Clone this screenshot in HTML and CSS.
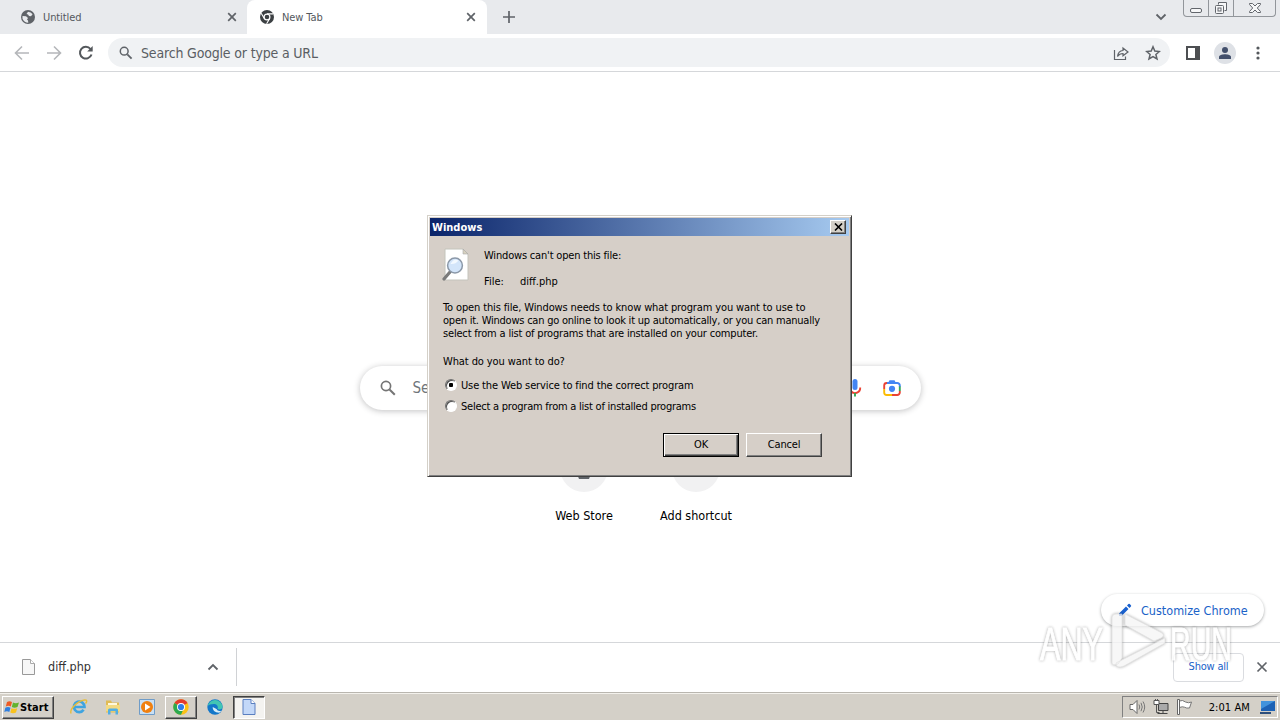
FILE: index.html
```html
<!DOCTYPE html>
<html lang="en">
<head>
    <meta charset="UTF-8">
    <title>New Tab</title>
    <link rel="stylesheet" href="styles.css">
</head>
<body>
<div class="browser">
    <div class="tabstrip">
        <div class="tab">
            <svg class="favicon" width="14" height="14" viewBox="0 0 14 14"><circle cx="7" cy="7" r="7" fill="#5f6368"/><path d="M1.500 6l3.500.2 2 1.800-1 1.500 1 1 .3 2.200q-4-.2-5.800-4zM7 1.700q3 0 4.600 2.500l-1.600 2-2-.2-1-1.500-1.500-.5z" fill="#e8eaed"/></svg>
            <span class="tab-title">Untitled</span>
            <svg class="tab-close" width="10" height="10" viewBox="0 0 10 10"><path d="M1.200 1.200l7.600 7.600M8.800 1.200L1.200 8.800"/></svg>
        </div>
        <div class="tab active">
            <svg class="favicon" width="14" height="14" viewBox="0 0 14 14"><circle cx="7" cy="7" r="7" fill="#3c4043"/><circle cx="7" cy="7" r="2.900" fill="#3c4043" stroke="#fff" stroke-width="1.200"/><path d="M7 3.900h6.200M4.300 8.500L1.200 3.200M9.700 8.500L6.600 13.800" stroke="#fff" stroke-width="1.100"/></svg>
            <span class="tab-title">New Tab</span>
            <svg class="tab-close" width="10" height="10" viewBox="0 0 10 10"><path d="M1.200 1.200l7.600 7.600M8.800 1.200L1.200 8.800"/></svg>
        </div>
        <svg class="new-tab" width="14" height="14" viewBox="0 0 14 14"><path d="M7 1v12M1 7h12"/></svg>
        <svg class="tab-search" width="12" height="8" viewBox="0 0 12 8"><path d="M1.500 1.500L6 6l4.500-4.500"/></svg>
        <div class="window-buttons">
            <span><svg width="14" height="7" viewBox="0 0 14 7"><rect x="1.500" y="1.500" width="11" height="4" rx="1.500"/></svg></span>
            <span><svg width="14" height="14" viewBox="0 0 14 14"><path d="M4.500 3.500v-2h8v8h-2"/><rect x="1.500" y="4.500" width="8" height="8" rx="1"/><rect x="4" y="7" width="3" height="3"/></svg></span>
            <span><svg width="14" height="12" viewBox="0 0 14 12"><path d="M1.500 1.500h3L7 4l2.500-2.500h3v1L9.300 6l3.200 3.500v1h-3L7 8l-2.500 2.500h-3v-1L4.700 6 1.500 2.500z"/></svg></span>
        </div>
    </div>

    <div class="toolbar">
        <svg class="nav dim" width="16" height="16" viewBox="0 0 16 16"><path d="M15 8H2M8 1.500L1.500 8 8 14.500"/></svg>
        <svg class="nav dim" width="16" height="16" viewBox="0 0 16 16"><path d="M1 8h13M8 1.500L14.500 8 8 14.500"/></svg>
        <svg class="nav" width="16" height="16" viewBox="0 0 16 16"><path d="M13.500 9.500A5.900 5.900 0 1 1 12.500 4l1 1.300"/><path d="M14.700 1v5.500H9.200z" class="solid"/></svg>
        <div class="omnibox">
            <svg width="14" height="14" viewBox="0 0 14 14"><circle cx="5.200" cy="5.200" r="3.900" fill="none" stroke="#5f6368" stroke-width="1.500"/><path d="M8.300 8.300l4.300 4.300" stroke="#5f6368" stroke-width="1.800"/></svg>
            <span class="omnibox-text">Search Google or type a URL</span>
            <svg class="share" width="16" height="16" viewBox="0 0 16 16"><path d="M1.500 5v9.500h11v-3"/><path d="M4.500 11.500c.5-4 2-5.700 5.500-6V3l5 4-5 3.800V8.500c-2.500 0-4 .7-5.500 3z"/></svg>
            <svg class="star" width="16" height="16" viewBox="0 0 16 16"><path d="M8 1.800l1.800 4.300 4.600.4-3.500 3 1.100 4.500L8 11.600 4 14l1.100-4.500-3.500-3 4.600-.4z"/></svg>
        </div>
        <svg class="side-panel" width="14" height="14" viewBox="0 0 14 14"><rect x="1" y="1" width="12" height="12"/><path d="M9 1h4v12H9z" class="solid"/></svg>
        <span class="avatar"><svg width="12" height="12" viewBox="0 0 12 12"><circle cx="6" cy="3" r="3"/><path d="M0 12V9.800C0 8 3.500 7.200 6 7.200s6 .8 6 2.600V12z"/></svg></span>
        <svg class="menu-dots" width="4" height="14" viewBox="0 0 4 14"><circle cx="2" cy="2" r="1.600"/><circle cx="2" cy="7" r="1.600"/><circle cx="2" cy="12" r="1.600"/></svg>
    </div>

    <div class="page">
        <div class="searchbox">
            <svg width="16" height="16" viewBox="0 0 16 16"><circle cx="6" cy="6" r="4.600" fill="none" stroke="#757575" stroke-width="1.700"/><path d="M9.500 9.500l5.300 5.300" stroke="#757575" stroke-width="2"/></svg>
            <span class="searchbox-text">Search Google or type a URL</span>
            <svg class="mic" width="14" height="18" viewBox="0 0 14 18"><rect x="4.500" y="0" width="5" height="11" rx="2.500" fill="#4285f4"/><path d="M1.800 8.500a5.200 5.200 0 0 0 1.500 4" stroke="#fbbc04"/><path d="M3.300 12.500a5.200 5.200 0 0 0 8.900-4" stroke="#ea4335"/><path d="M7 14v3.500" stroke="#34a853"/></svg>
            <svg class="lens" width="18" height="18" viewBox="0 0 18 18"><path d="M1.200 10V6.500a2.500 2.500 0 0 1 2.500-2.500H5" stroke="#ea4335"/><path d="M4 4h10.300a2.500 2.500 0 0 1 2.500 2.500V8" stroke="#4285f4"/><path class="fill" d="M6.500 1.300h5L13 4H5z"/><path d="M1.200 10v3.500a2.500 2.500 0 0 0 2.500 2.500H9" stroke="#fbbc04"/><path d="M9 16h5.300a2.500 2.500 0 0 0 2.500-2.500V12" stroke="#ea4335"/><path d="M16.800 7.500V12" stroke="#34a853"/><circle cx="9" cy="9.800" r="3.100" fill="#4285f4"/></svg>
        </div>
        <div class="shortcuts">
            <div class="shortcut">
                <span class="tile"><svg width="24" height="24" viewBox="0 0 24 24"><path d="M3 5h18v13H3z" fill="#4285f4"/><path d="M5 18h14l-2 5H7z" fill="#5f6368"/></svg></span>
                <span class="label">Web Store</span>
            </div>
            <div class="shortcut">
                <span class="tile"><svg width="24" height="24" viewBox="0 0 24 24"><path d="M12 5v13M5.500 11.500h13" stroke="#5f6368" stroke-width="2"/></svg></span>
                <span class="label">Add shortcut</span>
            </div>
        </div>
        <div class="customize">
            <svg width="14" height="14" viewBox="0 0 14 14"><path d="M1 13v-2.500l7-7L10.500 6l-7 7zM9 2.500L10.400 1.100q.7-.6 1.400 0l1.100 1.100q.7.700 0 1.400L11.500 5z" fill="#1a62d0"/></svg>
            <span>Customize Chrome</span>
        </div>
    </div>

    <div class="downloads">
        <div class="download">
            <svg width="13" height="16" viewBox="0 0 13 16"><path d="M.5.500h8l4 4v11H.500z" fill="#f7f7f7" stroke="#999"/><path d="M8.500.500v4h4" fill="#fff" stroke="#aaa"/></svg>
            <span class="download-name">diff.php</span>
            <svg class="chevron" width="12" height="8" viewBox="0 0 12 8"><path d="M1.500 6.500L6 2l4.500 4.500"/></svg>
        </div>
        <span class="show-all">Show all</span>
        <svg class="bar-close" width="12" height="12" viewBox="0 0 12 12"><path d="M1.500 1.500l9 9M10.500 1.500l-9 9"/></svg>
    </div>
</div>

<div class="taskbar">
    <div class="start">
        <svg width="16" height="15" viewBox="0 0 16 15"><path d="M3 2q2.500-1.500 5 0L6.800 6.500q-2.300-1.500-5 0z" fill="#ee5a24"/><path d="M9 2.500q2.500 1.500 6 0L13.500 7q-3 1.300-5.700 0z" fill="#62b32e"/><path d="M1.300 7.700q2.700-1.400 5.200 0L5.300 12q-2.300-1.400-5 0z" fill="#2f7fe0"/><path d="M7.500 8.200q2.700 1.300 5.700 0L12 12.500q-3 1.300-5.700 0z" fill="#f9c21c"/></svg>
        <span>Start</span>
    </div>
    <span class="task">
        <svg width="18" height="16" viewBox="0 0 18 16"><path d="M13.600 10.800A5.300 5.300 0 1 1 14.500 8H5" fill="none" stroke="#3fa4e0" stroke-width="2.700"/><path d="M1.200 14.500C-1 11 7 2 14.500 1c3-.3 2.500 2 1 3.600" fill="none" stroke="#e7bd3b" stroke-width="1.400"/></svg>
    </span>
    <span class="task">
        <svg width="16" height="16" viewBox="0 0 16 16"><path d="M1 1.500h5l1 2h7v10H1z" fill="#e0bb55"/><path d="M3 4h9v5H3z" fill="#fff8dc"/><path d="M1 6h14v6.500H1z" fill="#f3da82"/><path d="M3 15.500v-4.500q0-1.500 1.500-1.500h7q1.500 0 1.500 1.500v4.500h-2.500v-3.500h-5v3.500z" fill="#52aee3"/></svg>
    </span>
    <span class="task">
        <svg width="16" height="16" viewBox="0 0 16 16"><path d="M.5.500h15v15H.500z" fill="#c9e0f4" stroke="#6f9cc8"/><circle cx="8" cy="8" r="6" fill="#f08010"/><path d="M6 4.500l5.500 3.500L6 11.500z" fill="#fff"/></svg>
    </span>
    <span class="task raised">
        <svg width="16" height="16" viewBox="0 0 16 16"><circle cx="8" cy="8" r="7.700" fill="#fbc116"/><path d="M8 8L1.400 4A7.700 7.700 0 0 1 14.600 4z" fill="#e33b2e"/><path d="M1.400 4A7.700 7.700 0 0 0 8 15.700L10.500 10 8 8z" fill="#2da94f"/><circle cx="8" cy="8" r="4" fill="#fff"/><circle cx="8" cy="8" r="3.100" fill="#2f7de9"/></svg>
    </span>
    <span class="task">
        <svg width="16" height="16" viewBox="0 0 16 16"><circle cx="8" cy="8" r="7.700" fill="#1377c9"/><path d="M.5 7A7.700 7.700 0 0 1 15.600 7.500c0 3-3 3.500-5 2.500 1-3-1-5-4-5-2.500 0-5 .8-6.100 2z" fill="#42c5b3"/><path d="M5.700 8q-.5 5 6.500 5.800 1.500-.8 2.300-2-4 1-5-1.800z" fill="#d8eef8"/></svg>
    </span>
    <span class="task pressed">
        <svg width="14" height="16" viewBox="0 0 14 16"><path d="M1 .5h8l4 4v11H1z" fill="#c3d8f8" stroke="#5a7fc0"/><path d="M9 .5v4h4" fill="#fff" stroke="#5a7fc0"/></svg>
    </span>
    <div class="tray">
        <svg width="17" height="16" viewBox="0 0 17 16"><path d="M1 5.500h3l4-4v13l-4-4H1z" fill="#fff" stroke="#666"/><path d="M10 5.500q1.500 2.500 0 5M12 3.800q2.500 4.200 0 8.400M14 2.500q3.400 5.500 0 11" fill="none" stroke="#777"/></svg>
        <svg width="16" height="16" viewBox="0 0 16 16"><path d="M5.500 4.500h9.500v7H5.500z" fill="#aaa" stroke="#444"/><path d="M4.500 14.500h10M10 12v2" stroke="#444"/><path d="M1 1.500h5v4H1z" fill="#fff" stroke="#555"/><path d="M2.500 0v2M4.500 0v2M3.500 5.500v8h3" fill="none" stroke="#555"/></svg>
        <svg width="17" height="16" viewBox="0 0 17 16"><path d="M3.500 2q3-1.500 6 1 3 1.500 6 0l-2 6q-3 .500-5-.8-2-1-5 .3z" fill="#fff" stroke="#777"/><path d="M1.500.500h2v15h-2z" fill="#fff" stroke="#666"/></svg>
        <span class="clock">2:01 AM</span>
        <svg width="16" height="14" viewBox="0 0 16 14"><path d="M1 1h14v10H1z" fill="#1d62b5"/><path d="M1 1h14L1 9z" fill="#4293dc"/><path d="M0 12h11v2H0z" fill="#2d4f7c"/></svg>
    </div>
</div>

<div class="dialog">
    <div class="titlebar">
        <span>Windows</span>
        <span class="dialog-close"><svg width="9" height="8" viewBox="0 0 9 8"><path d="M1 .5l7 7M8 .5l-7 7"/></svg></span>
    </div>
    <div class="dialog-body">
        <div class="file-info">
            <svg width="28" height="34" viewBox="0 0 28 34"><path d="M3 1h18l5 5v26H3z" fill="#fff" stroke="#c4c4bc"/><path d="M21 1v5h5z" fill="#d8d2c0" stroke="#aaa" stroke-width=".6"/><path d="M8 24l-6 7" stroke="#7b7b7b" stroke-width="3.200" stroke-linecap="round"/><circle cx="13" cy="17.500" r="7.400" fill="#d3e5fa" stroke="#8b98a8" stroke-width="1.500"/><path d="M8.500 16q3-6 8-3.500-3 4-8 3.500z" fill="#f3f9ff"/></svg>
            <div>
                <p class="cant-open">Windows can't open this file:</p>
                <p class="file-row"><span class="file-label">File:</span><span>diff.php</span></p>
            </div>
        </div>
        <p class="explain"><span class="loose">To open this file, Windows needs to know what program you want to use to</span><br><span class="tight">open it. Windows can go online to look it up automatically, or you can manually</span><br><span>select from a list of programs that are installed on your computer.</span></p>
        <p class="question">What do you want to do?</p>
        <div class="option"><span class="radio checked"></span><span class="loose">Use the Web service to find the correct program</span></div>
        <div class="option"><span class="radio"></span><span class="tight">Select a program from a list of installed programs</span></div>
        <div class="buttons">
            <span class="button default">OK</span>
            <span class="button">Cancel</span>
        </div>
    </div>
</div>

<svg class="watermark" width="220" height="76" viewBox="0 0 220 76">
    <text x="4" y="54" textLength="63" lengthAdjust="spacingAndGlyphs">ANY</text>
    <path d="M76 57V12q0-4 4-4h6v44l-4 6q-6 2-6-1zM89 8l37 19q3 3-1 5l-7 3-29-16zM129 32v5L88 60q-8 3-8-3z"/>
    <text x="134" y="54" textLength="62" lengthAdjust="spacingAndGlyphs">RUN</text>
</svg>
</body>
</html>
```
FILE: styles.css
```css
body {
    margin: 0;
    width: 1280px;
    height: 720px;
    overflow: hidden;
    display: flex;
    flex-direction: column;
    background: #fff;
    font: 11px "DejaVu Sans Condensed", "DejaVu Sans", sans-serif;
    font-stretch: condensed;
    white-space: nowrap;
}
p {
    margin: 0;
}
svg {
    flex: none;
}
.browser {
    height: 692px;
    display: flex;
    flex-direction: column;
}

/* tabs */
.tabstrip {
    height: 34px;
    display: flex;
    background: #e8eaed;
}
.tab {
    box-sizing: border-box;
    width: 247px;
    height: 34px;
    padding: 0 10px 0 21px;
    display: flex;
    align-items: center;
    color: #54585d;
}
.tab.active {
    width: 240px;
    padding: 0 11px 0 13px;
    background: #fff;
    border-radius: 8px 8px 0 0;
}
.tab-title {
    flex: 1;
    margin-left: 8px;
    letter-spacing: -0.1px;
}
.tab-close path, .new-tab path, .bar-close path {
    stroke: #5f6368;
    stroke-width: 1.7;
}
.new-tab {
    margin: 10px 0 0 15px;
}
.tab-search {
    margin: 13px 16px 0 auto;
}
.tab-search path, .chevron path {
    fill: none;
    stroke: #5f6368;
    stroke-width: 1.8;
}
.window-buttons {
    box-sizing: border-box;
    width: 93px;
    height: 17px;
    margin-right: 4px;
    display: flex;
    border: 1px solid #92969b;
    border-top: 0;
    border-radius: 0 0 4px 4px;
}
.window-buttons span {
    width: 24px;
    display: flex;
    justify-content: center;
    align-items: center;
    border-right: 1px solid #92969b;
}
.window-buttons span:first-child {
    align-items: flex-end;
    padding-bottom: 2px;
    box-sizing: border-box;
    width: 25px;
}
.window-buttons span:last-child {
    flex: 1;
    border: 0;
}
.window-buttons svg * {
    fill: #f6f7f8;
    stroke: #62666c;
}

/* toolbar */
.toolbar {
    box-sizing: border-box;
    height: 38px;
    padding: 0 20px 0 14px;
    display: flex;
    align-items: center;
    border-bottom: 1px solid #d5d7da;
}
.nav {
    margin-right: 16px;
}
.nav path {
    fill: none;
    stroke: #54585c;
    stroke-width: 2;
}
.nav.dim path {
    stroke: #b5b7ba;
    stroke-width: 1.6;
}
.nav .solid {
    fill: #54585c;
    stroke: none;
}
.omnibox {
    box-sizing: border-box;
    width: 1064px;
    height: 29px;
    margin-left: -2px;
    padding: 0 9px 0 11px;
    display: flex;
    align-items: center;
    border-radius: 15px;
    background: #f0f2f4;
}
.omnibox-text {
    flex: 1;
    margin-left: 8px;
    color: #5a5e63;
    font-size: 14px;
    letter-spacing: -0.17px;
}
.share path, .star path {
    fill: none;
    stroke: #5f6368;
    stroke-width: 1.2;
}
.star {
    margin-left: 16px;
}
.star path {
    stroke-width: 1.5;
}
.side-panel {
    margin-left: 16px;
}
.side-panel rect {
    fill: none;
    stroke: #4d4f52;
    stroke-width: 2;
}
.side-panel .solid {
    fill: #4d4f52;
}
.avatar {
    width: 22px;
    height: 22px;
    margin-left: 14px;
    display: flex;
    align-items: center;
    justify-content: center;
    border-radius: 50%;
    background: #dee1e6;
}
.avatar svg {
    fill: #43506c;
}
.menu-dots {
    margin-left: 20px;
    fill: #54585c;
}

/* new tab page */
.page {
    height: 570px;
    display: flex;
    flex-direction: column;
    align-items: center;
}
.searchbox {
    box-sizing: border-box;
    width: 561px;
    height: 44px;
    margin-top: 294px;
    padding: 0 20px;
    display: flex;
    align-items: center;
    border-radius: 22px;
    box-shadow: 0 1px 6px rgba(32, 33, 36, .28);
}
.searchbox-text {
    flex: 1;
    margin-left: 17px;
    color: #70757a;
    font-size: 15px;
}
.mic {
    margin-right: 21px;
}
.mic path, .lens path {
    fill: none;
    stroke-width: 1.9;
}
.lens .fill {
    fill: #4285f4;
}
.shortcuts {
    display: flex;
    margin-top: 34px;
}
.shortcut {
    width: 112px;
    display: flex;
    flex-direction: column;
    align-items: center;
}
.tile {
    width: 48px;
    height: 48px;
    display: flex;
    align-items: center;
    justify-content: center;
    border-radius: 50%;
    background: #f1f1f2;
}
.label {
    margin-top: 15px;
    font-size: 12.5px;
    line-height: 18px;
}
.customize {
    box-sizing: border-box;
    width: 163px;
    height: 32px;
    margin: auto 16px 16px auto;
    padding: 0 17px;
    display: flex;
    align-items: center;
    border-radius: 16px;
    box-shadow: 0 1px 3px rgba(60, 64, 67, .45);
    color: #1a62c8;
    font-size: 12.5px;
}
.customize span {
    margin-left: 9px;
}

/* downloads */
.downloads {
    box-sizing: border-box;
    height: 50px;
    padding: 0 12px 1px 0;
    display: flex;
    align-items: center;
    border-top: 1px solid #d5d7da;
}
.download {
    box-sizing: border-box;
    width: 237px;
    height: 38px;
    padding: 0 17px 0 22px;
    display: flex;
    align-items: center;
    border-right: 1px solid #d0d2d5;
}
.download-name {
    flex: 1;
    margin: -2px 0 0 13px;
    color: #333;
    font-size: 12.5px;
}
.show-all {
    box-sizing: border-box;
    width: 71px;
    height: 29px;
    margin: 0 12px 0 auto;
    border: 1px solid #dadce0;
    border-radius: 4px;
    color: #1a62c8;
    line-height: 26px;
    text-align: center;
    letter-spacing: -0.2px;
}

/* taskbar */
.taskbar {
    box-sizing: border-box;
    height: 28px;
    padding: 2px 2px 1px;
    display: flex;
    align-items: center;
    background: #d4d0c8;
    border-top: 1px solid #b9b6af;
    box-shadow: inset 0 1px #f3f1ec;
}
.start, .raised {
    box-sizing: border-box;
    border: 1px solid;
    border-color: #fff #404040 #404040 #fff;
    box-shadow: inset -1px -1px #808080;
}
.start {
    width: 52px;
    height: 23px;
    margin-right: 9px;
    padding-left: 1px;
    display: flex;
    align-items: center;
    font-weight: bold;
    letter-spacing: 0.1px;
}
.task {
    box-sizing: border-box;
    width: 32px;
    height: 23px;
    margin-right: 2px;
    display: flex;
    align-items: center;
    justify-content: center;
}
.pressed {
    border: 1px solid;
    border-color: #404040 #fff #fff #404040;
    box-shadow: inset 1px 1px #808080;
    background: #f4f3f0;
}
.tray {
    box-sizing: border-box;
    width: 156px;
    height: 22px;
    margin-left: auto;
    padding: 0 1px 0 6px;
    display: flex;
    align-items: center;
    gap: 7px;
    border: 1px solid;
    border-color: #808080 #fff #fff #808080;
}
.clock {
    flex: 1;
    padding-right: 3px;
    text-align: right;
    letter-spacing: 0.1px;
}

/* message box */
.dialog {
    box-sizing: border-box;
    position: absolute;
    left: 427px;
    top: 215px;
    width: 425px;
    height: 262px;
    padding: 1px;
    border: 1px solid;
    border-color: #d4d0c8 #404040 #404040 #d4d0c8;
    box-shadow: inset 1px 1px #fff, inset -1px -1px #808080;
    background: #d6cfc8;
}
.titlebar {
    height: 18px;
    margin: 1px;
    padding: 0 3px 0 2px;
    display: flex;
    align-items: center;
    justify-content: space-between;
    background: linear-gradient(to right, #0a246a, #a6caf0);
    color: #fff;
    font-weight: bold;
}
.dialog-close {
    box-sizing: border-box;
    width: 16px;
    height: 14px;
    display: flex;
    align-items: center;
    justify-content: center;
    border: 1px solid;
    border-color: #fff #404040 #404040 #fff;
    box-shadow: inset -1px -1px #808080;
    background: #d4d0c8;
}
.dialog-close path {
    stroke: #000;
    stroke-width: 1.6;
}
.dialog-body {
    padding: 11px 28px 0 13px;
    line-height: 13px;
    letter-spacing: -0.18px;
}
.loose {
    letter-spacing: -0.13px;
}
.tight {
    letter-spacing: -0.23px;
}
.file-info {
    display: flex;
    gap: 14px;
}
.cant-open {
    margin-top: 1px;
}
.file-row {
    margin-top: 13px;
    letter-spacing: 0;
}
.file-label {
    display: inline-block;
    width: 36px;
}
.explain {
    margin: 13px 0 15px 1px;
}
.question {
    margin: 0 0 11px 1px;
    letter-spacing: -0.1px;
}
.option {
    height: 13px;
    margin: 0 0 8px 3px;
    display: flex;
    align-items: center;
    gap: 4px;
}
.radio {
    box-sizing: border-box;
    width: 12px;
    height: 12px;
    margin-top: -2px;
    border: 1px solid;
    border-color: #707070 #fff #fff #707070;
    border-radius: 50%;
    background: #fff;
    box-shadow: inset 1px 1px #505050;
}
.radio.checked {
    background: radial-gradient(circle, #000 2px, #fff 2.5px);
}
.buttons {
    margin-top: 20px;
    display: flex;
    justify-content: flex-end;
    gap: 7px;
}
.button {
    box-sizing: border-box;
    width: 76px;
    height: 24px;
    border: 1px solid;
    border-color: #fff #404040 #404040 #fff;
    box-shadow: inset -1px -1px #808080;
    line-height: 22px;
    text-align: center;
}
.button.default {
    border-color: #000;
    box-shadow: inset 1px 1px #fff, inset -1px -1px #404040, inset -2px -2px #808080;
}

.watermark {
    position: absolute;
    left: 1036px;
    top: 606px;
    opacity: .8;
    filter: drop-shadow(0 0 1.5px rgba(0, 0, 0, .4));
}
.watermark text {
    font: 47px "Liberation Sans Narrow", "Liberation Sans", sans-serif;
    fill: #fff;
    stroke: #fff;
    stroke-width: 1;
}
.watermark path {
    fill: #f6f6f6;
    stroke: #ddd;
    stroke-width: .8;
}
```
